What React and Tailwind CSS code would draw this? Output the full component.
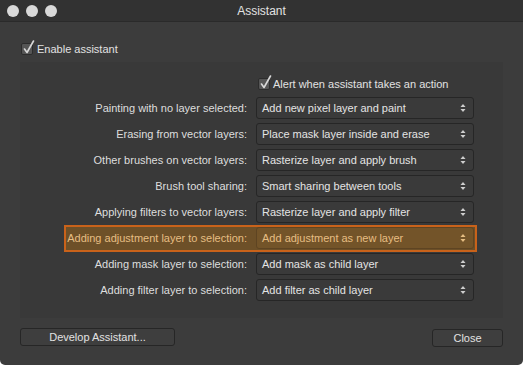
import React from 'react';

const rows = [
  ['Painting with no layer selected:', 'Add new pixel layer and paint'],
  ['Erasing from vector layers:', 'Place mask layer inside and erase'],
  ['Other brushes on vector layers:', 'Rasterize layer and apply brush'],
  ['Brush tool sharing:', 'Smart sharing between tools'],
  ['Applying filters to vector layers:', 'Rasterize layer and apply filter'],
  ['Adding adjustment layer to selection:', 'Add adjustment as new layer', true],
  ['Adding mask layer to selection:', 'Add mask as child layer'],
  ['Adding filter layer to selection:', 'Add filter as child layer'],
];

const Check = () => (
  <span className="relative inline-block w-[12px] h-[12px] rounded-[2px] bg-[#555] border border-[#2c2c2c]">
    <svg className="absolute -top-[4px] left-[0px]" width="14" height="15" viewBox="0 0 14 15">
      <path d="M2.5 9 L5 12.5 L11.5 1" stroke="#d8d8d8" strokeWidth="1.6" fill="none" strokeLinecap="round" strokeLinejoin="round" />
    </svg>
  </span>
);

const Arrows = ({ color = '#cfcfcf' }) => (
  <svg width="6" height="10" viewBox="0 0 6 10">
    <path d="M3 1 L5.5 4 L0.5 4 Z" fill={color} />
    <path d="M3 9 L5.5 6 L0.5 6 Z" fill={color} />
  </svg>
);

const Row = ({ label, value, hot }) => (
  <div className="relative flex items-center h-[22px]">
    {hot && (
      <span className="absolute left-[44px] right-[26px] -top-[2px] -bottom-[3px] bg-[#6d5028] border-2 border-[#c9621a]" />
    )}
    <span className={`relative w-[228px] pr-[1px] text-right ${hot ? 'text-[#e6be83]' : 'text-[#dedede]'}`}>{label}</span>
    <div
      className={`relative ml-[8px] w-[218px] h-[22px] flex items-center justify-between pl-[5px] pr-[7px] rounded-[3px] border ${
        hot ? 'border-[#5e4422] bg-[#735429] text-[#e6be83]' : 'border-[#262626] bg-[#3a3a3a] text-[#e4e4e4]'
      }`}
    >
      <span>{value}</span>
      <Arrows color={hot ? '#e6be83' : '#cfcfcf'} />
    </div>
  </div>
);

export default function App() {
  return (
    <div className="w-[523px] h-[365px] bg-white font-['Liberation_Sans',Arial,sans-serif] text-[11px]">
      <div className="w-full h-full flex flex-col bg-[#3c3c3c] rounded-b-[5px] overflow-hidden">
        <div className="relative h-[22px] flex items-center justify-center bg-[#323232] border-b border-[#2a2a2a]">
          <div className="absolute left-[7px] top-[5px] flex gap-[7px]">
            <span className="w-[12px] h-[12px] rounded-full bg-[#d9d9d9]" />
            <span className="w-[12px] h-[12px] rounded-full bg-[#d9d9d9]" />
            <span className="w-[12px] h-[12px] rounded-full bg-[#d9d9d9]" />
          </div>
          <span className="text-[12px] text-[#e2e2e2]">Assistant</span>
        </div>

        <div className="flex items-center gap-[4px] pl-[21px] mt-[18px] h-[18px] text-[#e2e2e2]">
          <Check />
          <span>Enable assistant</span>
        </div>

        <div className="mx-[20px] mt-[4px] h-[256px] bg-[#393939] pt-[14px]">
          <div className="flex items-center gap-[3px] pl-[238px] h-[16px] text-[#e2e2e2]">
            <Check />
            <span>Alert when assistant takes an action</span>
          </div>
          <div className="mt-[5px] flex flex-col gap-[4px]">
            {rows.map(([l, v, h]) => (
              <Row key={l} label={l} value={v} hot={h} />
            ))}
          </div>
        </div>

        <div className="flex justify-between items-start px-[20px] mt-[10px] text-[#e2e2e2]">
          <button className="w-[155px] h-[18px] rounded-[3px] border border-[#262626] bg-[#3e3e3e] leading-none">
            Develop Assistant...
          </button>
          <button className="mt-[1px] w-[71px] h-[18px] rounded-[3px] border border-[#262626] bg-[#3e3e3e] leading-none">
            Close
          </button>
        </div>
      </div>
    </div>
  );
}
